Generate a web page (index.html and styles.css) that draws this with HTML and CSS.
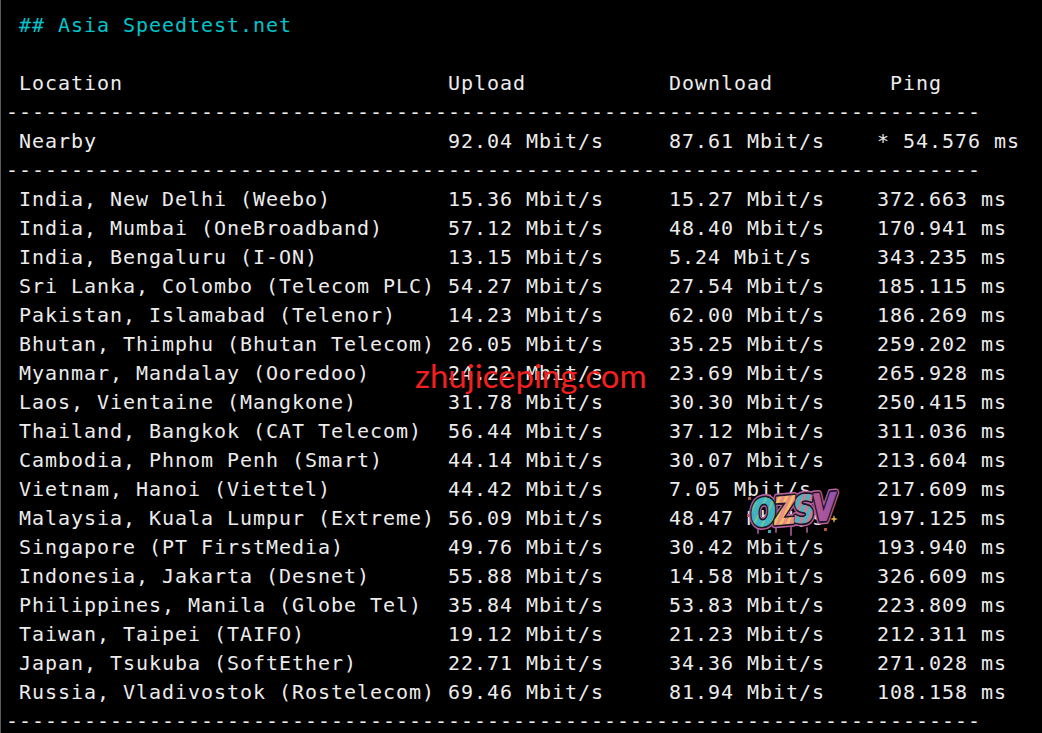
FILE: index.html
```html
<!DOCTYPE html>
<html lang="en">
<head>
<meta charset="utf-8">
<title>Asia Speedtest.net</title>
<link rel="stylesheet" href="styles.css">
</head>
<body>
<main class="terminal">
<pre class="output"><span class="heading"> ## Asia Speedtest.net</span>

 Location                         Upload           Download         Ping
---------------------------------------------------------------------------
 Nearby                           92.04 Mbit/s     87.61 Mbit/s    * 54.576 ms
---------------------------------------------------------------------------
 India, New Delhi (Weebo)         15.36 Mbit/s     15.27 Mbit/s    372.663 ms
 India, Mumbai (OneBroadband)     57.12 Mbit/s     48.40 Mbit/s    170.941 ms
 India, Bengaluru (I-ON)          13.15 Mbit/s     5.24 Mbit/s     343.235 ms
 Sri Lanka, Colombo (Telecom PLC) 54.27 Mbit/s     27.54 Mbit/s    185.115 ms
 Pakistan, Islamabad (Telenor)    14.23 Mbit/s     62.00 Mbit/s    186.269 ms
 Bhutan, Thimphu (Bhutan Telecom) 26.05 Mbit/s     35.25 Mbit/s    259.202 ms
 Myanmar, Mandalay (Ooredoo)      24.22 Mbit/s     23.69 Mbit/s    265.928 ms
 Laos, Vientaine (Mangkone)       31.78 Mbit/s     30.30 Mbit/s    250.415 ms
 Thailand, Bangkok (CAT Telecom)  56.44 Mbit/s     37.12 Mbit/s    311.036 ms
 Cambodia, Phnom Penh (Smart)     44.14 Mbit/s     30.07 Mbit/s    213.604 ms
 Vietnam, Hanoi (Viettel)         44.42 Mbit/s     7.05 Mbit/s     217.609 ms
 Malaysia, Kuala Lumpur (Extreme) 56.09 Mbit/s     48.47 Mbit/s    197.125 ms
 Singapore (PT FirstMedia)        49.76 Mbit/s     30.42 Mbit/s    193.940 ms
 Indonesia, Jakarta (Desnet)      55.88 Mbit/s     14.58 Mbit/s    326.609 ms
 Philippines, Manila (Globe Tel)  35.84 Mbit/s     53.83 Mbit/s    223.809 ms
 Taiwan, Taipei (TAIFO)           19.12 Mbit/s     21.23 Mbit/s    212.311 ms
 Japan, Tsukuba (SoftEther)       22.71 Mbit/s     34.36 Mbit/s    271.028 ms
 Russia, Vladivostok (Rostelecom) 69.46 Mbit/s     81.94 Mbit/s    108.158 ms
---------------------------------------------------------------------------</pre>
<div class="watermark">zhujiceping.com</div>
<svg class="logo" viewBox="0 0 110 60" width="110" height="60" aria-label="OZSV">
  <defs>
    <pattern id="pO" width="9" height="9" patternUnits="userSpaceOnUse" patternTransform="rotate(35)"><rect width="9" height="9" fill="#3fb4c6"/><rect width="2" height="9" fill="#7cc58e"/></pattern>
    <pattern id="pZ" width="7" height="7" patternUnits="userSpaceOnUse" patternTransform="rotate(35)"><rect width="7" height="7" fill="#ee8a8c"/><rect width="3" height="7" fill="#eec45a"/></pattern>
    <pattern id="pS" width="8" height="8" patternUnits="userSpaceOnUse" patternTransform="rotate(35)"><rect width="8" height="8" fill="#48b6bd"/><rect width="3" height="8" fill="#e8708f"/></pattern>
    <linearGradient id="gV" x1="0" y1="0" x2="1" y2="0"><stop offset="0" stop-color="#ef9a4c"/><stop offset="0.5" stop-color="#e2566f"/><stop offset="1" stop-color="#8a55b5"/></linearGradient>
  </defs>
  <path class="drip" d="M11 38v7M29 40v4M44 39v8M60 40v4"/>
  <rect class="speck" x="1" y="9" width="3" height="3"/>
  <rect class="speck" x="0" y="26" width="3" height="3"/>
  <rect class="speck speck-teal" x="21" y="42" width="3" height="3"/>
  <rect class="speck" x="77" y="40" width="3" height="3"/>
  <path class="spark" d="M87 27l1 3 3 1-3 1-1 3-1-3-3-1 3-1z"/>
  <g transform="rotate(-5 46 24) translate(4 35) scale(0.8 1)">
    <text class="logo-text logo-halo">OZSV</text>
    <text class="logo-text logo-dark">OZSV</text>
    <text class="logo-text logo-fill"><tspan fill="url(#pO)" stroke="url(#pO)">O</tspan><tspan fill="url(#pZ)" stroke="url(#pZ)">Z</tspan><tspan fill="url(#pS)" stroke="url(#pS)">S</tspan><tspan fill="url(#gV)" stroke="url(#gV)">V</tspan></text>
  </g>
</svg>
</main>
</body>
</html>
```
FILE: styles.css
```css
html, body {
  margin: 0;
  height: 100%;
  background: #000;
  overflow: hidden;
}

.terminal {
  position: relative;
  height: 733px;
  box-sizing: border-box;
  background: #000;
  border-left: 1px solid #5a5a5a;
  padding: 11px 0 0 5px;
  overflow: hidden;
}

.output {
  margin: 0;
  font-family: "DejaVu Sans Mono", "Liberation Mono", monospace;
  font-size: 20px;
  letter-spacing: 0.96px;
  line-height: 29px;
  color: #ececec;
}

.heading {
  color: #00c4cc;
}

.watermark {
  position: absolute;
  left: 414px;
  top: 356px;
  font-family: "Lato", "Open Sans", sans-serif;
  font-size: 33px;
  line-height: 38px;
  color: #f2201f;
  white-space: nowrap;
}

.logo {
  position: absolute;
  left: 746px;
  top: 488px;
}

.logo-text {
  font-family: "DejaVu Sans", sans-serif;
  font-weight: 700;
  font-style: italic;
  font-size: 37px;
  letter-spacing: -2.5px;
}

.logo-fill {
  stroke-width: 1.2px;
}

.logo-halo {
  fill: none;
  stroke: #b8609f;
  stroke-width: 7.5px;
  stroke-linejoin: round;
}

.logo-dark {
  fill: none;
  stroke: #1c1420;
  stroke-width: 4.5px;
  stroke-linejoin: round;
}

.drip {
  fill: none;
  stroke: #8a4a80;
  stroke-width: 2px;
  stroke-linecap: round;
}

.speck {
  fill: #b5553c;
}

.speck-teal {
  fill: #3fa8b8;
}

.spark {
  fill: #d8b04a;
}
```
